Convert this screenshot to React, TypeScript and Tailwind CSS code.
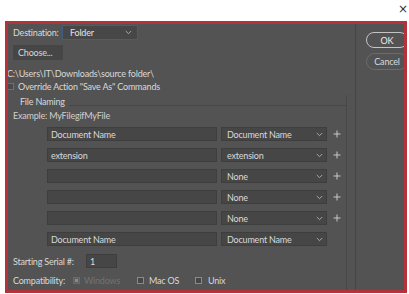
import React from 'react';

const Chevron = () => (
  <svg width="7" height="5" viewBox="0 0 7 5" className="shrink-0">
    <path d="M0.8 1 L3.5 3.7 L6.2 1" fill="none" stroke="#a8a8a8" strokeWidth="1" />
  </svg>
);

const Plus = () => (
  <svg width="8" height="8" viewBox="0 0 8 8" className="shrink-0">
    <path d="M4 0.5 V7.5 M0.5 4 H7.5" stroke="#c8c8c8" strokeWidth="1" />
  </svg>
);

const Box = ({ checked = false, disabled = false }: { checked?: boolean; disabled?: boolean }) => (
  <div
    className={`w-[7px] h-[7px] border shrink-0 flex items-center justify-center ${
      disabled ? 'border-[#6a6a6a] bg-[#5f5f5f]' : 'border-[#8a8a8a] bg-[#474747]'
    }`}
  >
    {checked && <div className="w-[3px] h-[3px] bg-[#8a8a8a]" />}
  </div>
);

interface Row {
  text: string;
  token: string;
  plus: boolean;
}

const rows: Row[] = [
  { text: 'Document Name', token: 'Document Name', plus: true },
  { text: 'extension', token: 'extension', plus: true },
  { text: '', token: 'None', plus: true },
  { text: '', token: 'None', plus: true },
  { text: '', token: 'None', plus: true },
  { text: 'Document Name', token: 'Document Name', plus: false },
];

export default function App() {
  return (
    <div className="w-[409px] h-[294px] bg-white overflow-hidden font-['Lato',sans-serif] text-[9px] tracking-[-0.2px] leading-none text-[#d9d9d9]">
      {/* Title strip */}
      <div className="h-[21px] flex items-start justify-end pr-[1px]">
        <span className="text-[12px] tracking-normal text-[#333] leading-none mt-[3px] font-['DejaVu_Sans',sans-serif]">×</span>
      </div>

      {/* Red frame */}
      <div className="ml-[5px] w-[402px] h-[272px] border-[3px] border-[#b3323c] bg-[#535353] flex overflow-hidden">
        {/* Left panel */}
        <div className="w-[348px] shrink-0 border-r border-[#464646] flex flex-col pt-[1px]">
          {/* Destination */}
          <div className="h-[15px] flex items-center">
            <span className="pl-[5px] w-[54px] shrink-0">Destination:</span>
            <div className="w-[76px] h-[15px] border border-[#3f5f86] bg-[#474747] flex items-center justify-between pl-[7px] pr-[5px]">
              <span className="text-[#e4e4e4]">Folder</span>
              <Chevron />
            </div>
          </div>

          {/* Choose */}
          <div className="mt-[5px] ml-[5px] w-[50px] h-[15px] bg-[#464646] flex items-center pl-[5px]">
            <span>Choose...</span>
          </div>

          <div className="mt-[7px] h-[12px] flex items-center -ml-[1px]">
            <span>C:\Users\IT\Downloads\source folder\</span>
          </div>

          <div className="mt-[1px] h-[12px] flex items-center gap-[4px] -ml-[1px]">
            <div className="w-[7px] h-[7px] border border-[#6f6f6f] bg-[#4a4a4a]" />
            <span>Override Action "Save As" Commands</span>
          </div>

          {/* File Naming group */}
          <div className="mt-[3px] flex-1 border-r border-[#474747] mr-[8px] flex flex-col">
            <div className="h-[12px] flex items-center">
              <span className="pl-[12px] pr-[4px]">File Naming</span>
              <div className="flex-1 h-px bg-[#474747] mt-[8px]" />
            </div>

            <div className="mt-[2px] h-[12px] flex items-center pl-[5px] text-[#cfcfcf]">
              Example: MyFilegifMyFile
            </div>

            <div className="mt-[6px] flex flex-col gap-[7px] pl-[39px]">
              {rows.map((r, i) => (
                <div key={i} className="h-[14px] flex items-center">
                  <div className="w-[170px] h-[14px] bg-[#464646] border border-[#3e3e3e] flex items-center pl-[3px]">
                    <span>{r.text}</span>
                  </div>
                  <div className="ml-[4px] w-[106px] h-[14px] bg-[#464646] border border-[#3e3e3e] flex items-center justify-between pl-[5px] pr-[3px]">
                    <span>{r.token}</span>
                    <Chevron />
                  </div>
                  {r.plus && (
                    <div className="ml-[6px]">
                      <Plus />
                    </div>
                  )}
                </div>
              ))}
            </div>

            <div className="mt-[8px] h-[14px] flex items-center pl-[5px]">
              <span className="w-[73px] shrink-0">Starting Serial #:</span>
              <div className="w-[31px] h-[14px] bg-[#464646] border border-[#3e3e3e] flex items-center pl-[3px]">1</div>
            </div>

            <div className="mt-[6px] h-[12px] flex items-center pl-[5px]">
              <span className="w-[60px] shrink-0">Compatibility:</span>
              <Box checked disabled />
              <span className="ml-[4px] w-[53px] shrink-0 text-[#727272]">Windows</span>
              <Box />
              <span className="ml-[5px] w-[46px] shrink-0">Mac OS</span>
              <Box />
              <span className="ml-[6px]">Unix</span>
            </div>
          </div>
        </div>

        {/* Buttons */}
        <div className="flex-1 flex flex-col pt-[8px] pl-[10px] gap-[5px]">
          <div className="w-[42px] h-[16px] rounded-full border border-[#c4c4c4] flex items-center justify-center text-[#ececec]">
            OK
          </div>
          <div className="w-[42px] h-[17px] rounded-full border border-[#6c6c6c] flex items-center justify-center">
            Cancel
          </div>
        </div>
      </div>
    </div>
  );
}
